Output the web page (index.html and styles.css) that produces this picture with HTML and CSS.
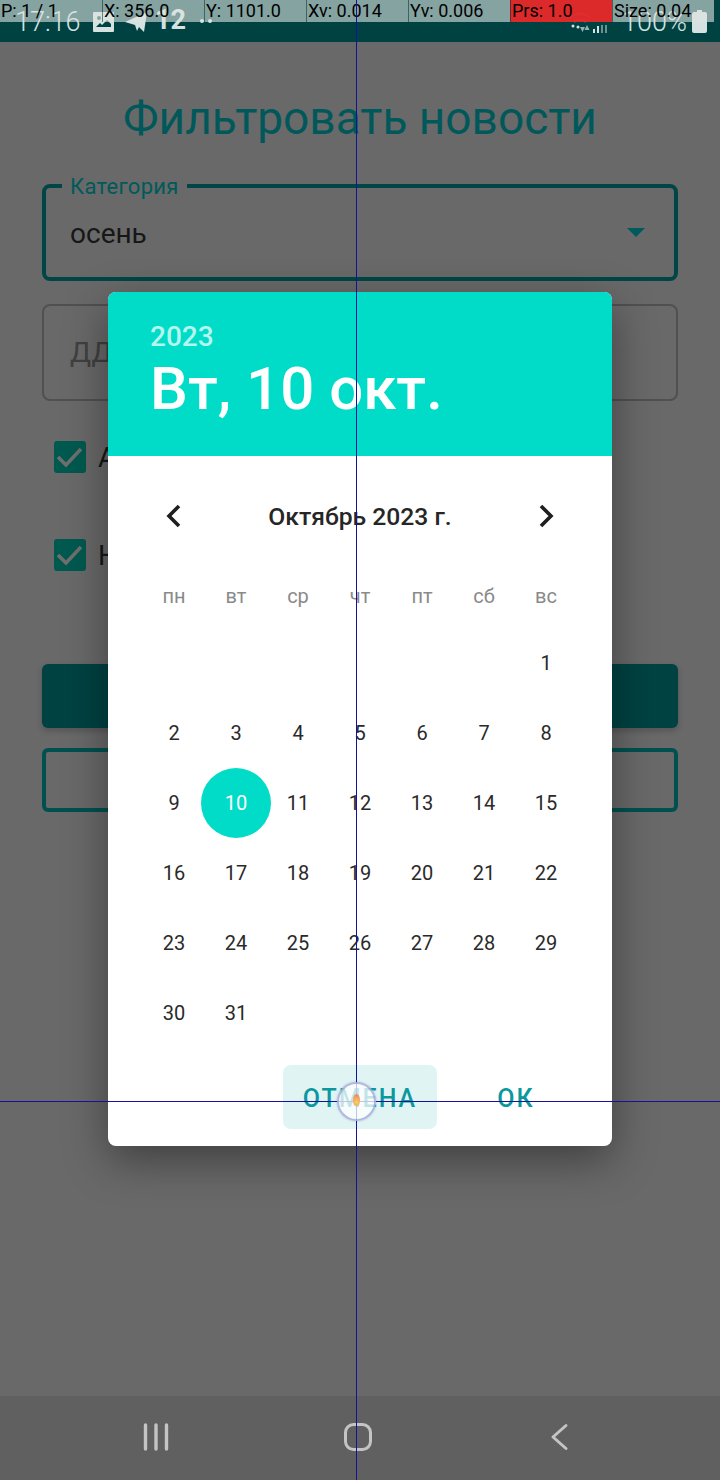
FILE: index.html
```html
<!DOCTYPE html>
<html lang="ru">
<head>
<meta charset="utf-8">
<title>Фильтровать новости</title>
<link rel="stylesheet" href="styles.css">
</head>
<body>
<div class="page">
  <header class="status">
    <div class="status-left">
      <span class="time">17:16</span>
      <svg class="ic-img" width="21" height="20" viewBox="0 0 21 20"><path fill="currentColor" fill-rule="evenodd" d="M1 0h19a1 1 0 0 1 1 1v18a1 1 0 0 1-1 1H1a1 1 0 0 1-1-1V1a1 1 0 0 1 1-1zm2 15h15v-3l-4-4-5 5-2-2zM6 4a2 2 0 1 0 0 4 2 2 0 0 0 0-4z"/></svg>
      <svg class="ic-plane" width="22" height="20" viewBox="0 0 22 20"><path fill="currentColor" d="M0 10 22 0l-3 20-5-5-2 4-2-6z"/></svg>
      <span class="num">12</span>
      <span class="dots"><i></i><i></i></span>
    </div>
    <div class="status-right">
      <svg class="ic-wifi" width="44" height="24" viewBox="0 0 44 24"><path fill="none" stroke="currentColor" stroke-width="2" opacity=".4" d="M3 8q10-9 20 0M7 12q6-5 12 0"/><circle cx="6" cy="16" r="1.500" fill="currentColor"/><circle cx="11" cy="17" r="1.500" fill="currentColor"/><path fill="currentColor" opacity=".7" d="M13 17h5l-2.500 5zM20 15l2.500 5h-5z"/><path fill="currentColor" d="M26 19h2v4h-2zM30 16h2v7h-2z"/><path fill="currentColor" opacity=".5" d="M34 15h2v8h-2zM38 15h2v8h-2z"/></svg>
      <span class="pct">100%</span>
      <svg class="ic-batt" width="15" height="23" viewBox="0 0 15 23"><path fill="currentColor" d="M5 0h5v2h3a2 2 0 0 1 2 2v17a2 2 0 0 1-2 2H2a2 2 0 0 1-2-2V4a2 2 0 0 1 2-2h3z"/></svg>
    </div>
    <div class="pointer-bar">
      <span class="pcell">P: 1 / 1</span>
      <span class="pcell">X: 356.0</span>
      <span class="pcell">Y: 1101.0</span>
      <span class="pcell">Xv: 0.014</span>
      <span class="pcell">Yv: 0.006</span>
      <span class="pcell pcell-red">Prs: 1.0</span>
      <span class="pcell">Size: 0.04</span>
    </div>
  </header>

  <main class="form">
    <h1 class="title">Фильтровать новости</h1>
    <div class="field field-active">
      <span class="field-label">Категория</span>
      <span class="field-value">осень</span>
      <span class="caret"></span>
    </div>
    <div class="field field-idle">
      <span class="field-value placeholder">ДД.ММ.ГГГГ</span>
    </div>
    <label class="check-row">
      <span class="check"><svg width="32" height="32" viewBox="0 0 32 32"><path fill="none" stroke="#6f6f6f" stroke-width="3.600" d="M4 16l8 8L27 8"/></svg></span>
      <span class="check-text">А</span>
    </label>
    <label class="check-row">
      <span class="check"><svg width="32" height="32" viewBox="0 0 32 32"><path fill="none" stroke="#6f6f6f" stroke-width="3.600" d="M4 16l8 8L27 8"/></svg></span>
      <span class="check-text">Н</span>
    </label>
    <div class="btn btn-filled"></div>
    <div class="btn btn-outline"></div>
  </main>

  <nav class="navbar">
    <span class="nav-item"><svg width="30" height="30" viewBox="0 0 30 30"><path fill="none" stroke="#c4c4c4" stroke-width="3.400" stroke-linecap="round" d="M4.500 3v24M15 3v24M25.500 3v24"/></svg></span>
    <span class="nav-item"><svg width="30" height="30" viewBox="0 0 30 30"><rect x="2.500" y="2.500" width="25" height="25" rx="8" fill="none" stroke="#c4c4c4" stroke-width="3"/></svg></span>
    <span class="nav-item"><svg width="30" height="30" viewBox="0 0 30 30"><path fill="none" stroke="#c4c4c4" stroke-width="3" stroke-linecap="round" stroke-linejoin="round" d="M21 3.500 8 15l13 11.500"/></svg></span>
  </nav>

  <section class="dialog">
    <div class="dlg-head">
      <div class="dlg-year">2023</div>
      <div class="dlg-date">Вт, 10 окт.</div>
    </div>
    <div class="month-row">
      <svg width="24" height="24" viewBox="0 0 24 24"><path fill="none" stroke="#1f1f1f" stroke-width="3.600" d="M17 2 7 12l10 10"/></svg>
      <span class="month-name">Октябрь 2023 г.</span>
      <svg width="24" height="24" viewBox="0 0 24 24"><path fill="none" stroke="#1f1f1f" stroke-width="3.600" d="m7 2 10 10L7 22"/></svg>
    </div>
    <div class="weekdays">
      <span>пн</span><span>вт</span><span>ср</span><span>чт</span><span>пт</span><span>сб</span><span>вс</span>
    </div>
    <div class="days">
      <span></span><span></span><span></span><span></span><span></span><span></span><span>1</span>
      <span>2</span><span>3</span><span>4</span><span>5</span><span>6</span><span>7</span><span>8</span>
      <span>9</span><span class="selected">10</span><span>11</span><span>12</span><span>13</span><span>14</span><span>15</span>
      <span>16</span><span>17</span><span>18</span><span>19</span><span>20</span><span>21</span><span>22</span>
      <span>23</span><span>24</span><span>25</span><span>26</span><span>27</span><span>28</span><span>29</span>
      <span>30</span><span>31</span>
    </div>
    <div class="actions">
      <span class="action action-pressed">ОТМЕНА</span>
      <span class="action">ОК</span>
    </div>
  </section>

  <div class="cross-v"></div>
  <div class="cross-h"></div>
  <div class="touch"><span class="touch-core"></span></div>
</div>
</body>
</html>
```

FILE: styles.css
```css
* { box-sizing: border-box; }
html, body { margin: 0; padding: 0; }
body { font-family: Roboto, "Noto Sans", sans-serif; background: #696969; }

.page {
  position: relative;
  width: 720px;
  height: 1480px;
  overflow: hidden;
  display: flex;
  flex-direction: column;
  background: #696969;
}

/* status bar */
.status {
  position: relative;
  flex: none;
  height: 42px;
  background: #004242;
  color: #d5e2e1;
  display: flex;
  justify-content: space-between;
  align-items: center;
  padding: 2px 13px 0 15px;
}
.status-left, .status-right { display: flex; align-items: center; }
.time { font-size: 27px; line-height: 40px; width: 63px; font-weight: 300; }
.ic-img { margin-left: 15px; }
.ic-plane { margin-left: 11px; }
.num { margin-left: 8px; font-size: 27px; font-weight: 700; line-height: 36px; width: 33px; margin-top: -4px; }
.dots { display: flex; gap: 4px; margin-left: 12px; margin-top: -2px; }
.dots i { width: 4px; height: 4px; border-radius: 50%; background: currentColor; }
.ic-wifi { margin-right: 11px; margin-top: 0; }
.pct { font-size: 27px; line-height: 40px; font-weight: 300; }
.ic-batt { margin-left: 5px; margin-top: -1px; }

.pointer-bar {
  position: absolute;
  left: 0;
  top: 0;
  width: 100%;
  height: 22px;
  display: grid;
  grid-template-columns: repeat(7, 102px);
  color: #000;
  font-size: 18px;
  line-height: 22px;
}
.pcell {
  background: rgba(222, 228, 223, .6);
  border-left: 1px solid rgba(0, 50, 50, .55);
  padding-left: 1px;
  white-space: nowrap;
  overflow: hidden;
}
.pcell:first-child { border-left: 0; }
.pcell-red { background: rgba(232, 40, 40, .95); }

/* form behind the dialog */
.form {
  flex: 1;
  padding: 50px 42px 0;
  display: flex;
  flex-direction: column;
}
.title {
  margin: 0 0 40px;
  font-size: 46px;
  line-height: 52px;
  font-weight: 400;
  text-align: center;
  color: #00585a;
}
.field {
  position: relative;
  height: 97px;
  border-radius: 8px;
  display: flex;
  align-items: center;
  padding: 0 26px;
  font-size: 28px;
  color: #171717;
}
.field-active { border: 4px solid #004646; padding: 2px 26px 0 24px; }
.field-idle { border: 2px solid #505050; margin-top: 23px; }
.field-label {
  position: absolute;
  left: 16px;
  top: -13px;
  padding: 0 8px;
  font-size: 22px;
  line-height: 24px;
  letter-spacing: .3px;
  color: #005a5a;
  background: #696969;
}
.placeholder { color: #404040; letter-spacing: .2px; }
.caret {
  position: absolute;
  right: 29px;
  top: 40px;
  border-left: 9px solid transparent;
  border-right: 9px solid transparent;
  border-top: 9px solid #005a5c;
}
.check-row {
  height: 98px;
  display: flex;
  align-items: center;
  gap: 12px;
  padding-left: 12px;
  font-size: 28px;
  color: #171717;
}
.check-row:first-of-type { margin-top: 7px; }
.check {
  width: 32px;
  height: 32px;
  border-radius: 3px;
  background: #00594f;
  display: block;
}
.check svg { display: block; }
.btn { height: 64px; border-radius: 6px; flex: none; }
.btn-filled { margin-top: 60px; background: #004242; box-shadow: 0 3px 6px rgba(0, 0, 0, .2); }
.btn-outline { margin-top: 20px; border: 4px solid #005050; }

/* navigation bar */
.navbar {
  flex: none;
  height: 84px;
  background: #606060;
  display: flex;
  justify-content: center;
  align-items: center;
  gap: 172px;
  padding: 0 4px 3px 0;
}
.nav-item { width: 30px; height: 30px; display: block; }
.nav-item svg { display: block; }

/* date dialog */
.dialog {
  position: absolute;
  left: 108px;
  top: 292px;
  width: 504px;
  height: 854px;
  background: #fff;
  border-radius: 8px;
  overflow: hidden;
  box-shadow: 0 14px 44px rgba(0, 0, 0, .4);
  display: flex;
  flex-direction: column;
}
.dlg-head {
  flex: none;
  height: 164px;
  background: #00dcc8;
  color: #fff;
  padding: 28px 42px 0;
}
.dlg-year { font-size: 28px; line-height: 34px; font-weight: 500; color: #b5f5ee; }
.dlg-date { font-size: 60px; line-height: 64px; font-weight: 500; margin-top: 3px; }
.month-row {
  flex: none;
  height: 120px;
  padding: 0 54px;
  display: flex;
  align-items: center;
  justify-content: space-between;
}
.month-row svg { display: block; }
.month-name { font-size: 24.700px; font-weight: 500; color: #262626; }
.weekdays, .days {
  display: grid;
  grid-template-columns: repeat(7, 62px);
  justify-content: center;
  text-align: center;
}
.weekdays { height: 52px; line-height: 40px; font-size: 20px; color: #8a8a8a; }
.days { grid-auto-rows: 70px; font-size: 20px; color: #2a2a2a; }
.days span {
  display: flex;
  align-items: center;
  justify-content: center;
}
.days .selected {
  width: 70px;
  height: 70px;
  margin-left: -4px;
  border-radius: 50%;
  background: #00dcc8;
  color: #fff;
}
.actions {
  position: absolute;
  right: 0;
  bottom: 17px;
  display: flex;
  gap: 2px;
  padding-right: 19px;
}
.action {
  height: 64px;
  min-width: 154px;
  border-radius: 8px;
  font-size: 25px;
  font-weight: 500;
  letter-spacing: 2px;
  line-height: 68px;
  text-align: center;
  color: #0b989e;
}
.action-pressed { background: #e0f4f4; }

/* developer pointer overlay */
.cross-v { position: absolute; left: 356px; top: 0; width: 1px; height: 100%; background: #12129c; }
.cross-h { position: absolute; left: 0; top: 1101px; width: 100%; height: 1px; background: #12129c; }
.touch {
  position: absolute;
  left: 337px;
  top: 1082px;
  width: 39px;
  height: 39px;
  border-radius: 50%;
  border: 2px solid rgba(120, 130, 200, .55);
  background: rgba(255, 255, 255, .75);
  box-shadow: 0 0 2px rgba(90, 100, 180, .5);
}
.touch-core {
  position: absolute;
  left: 14px;
  top: 10px;
  width: 7px;
  height: 12px;
  border-radius: 50% 50% 45% 45%;
  background: radial-gradient(circle at 50% 70%, #f5d060, #ef7a60);
}
```
